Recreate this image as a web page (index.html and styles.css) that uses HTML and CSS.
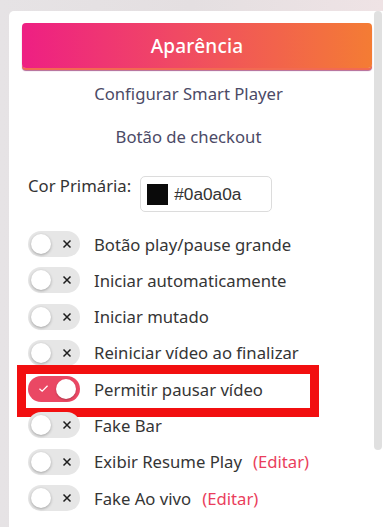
FILE: index.html
```html
<!DOCTYPE html>
<html lang="pt">
<head>
<meta charset="utf-8">
<link rel="stylesheet" href="styles.css">
</head>
<body>
<div class="card">
  <div class="header">Aparência</div>
  <div class="subtitle">Configurar Smart Player</div>
  <div class="subtitle second">Botão de checkout</div>
  <div class="color-row">
    <span class="color-label">Cor Primária:</span>
    <div class="color-input"><span class="swatch"></span><span class="hex">#0a0a0a</span></div>
  </div>
  <div class="rows">
    <div class="row"><span class="toggle"><span class="knob"></span><svg class="x" viewBox="0 0 10 10"><path d="M1.5 1.5L8.5 8.5M8.5 1.5L1.5 8.5"/></svg></span><span class="label">Botão play/pause grande</span></div>
    <div class="row"><span class="toggle"><span class="knob"></span><svg class="x" viewBox="0 0 10 10"><path d="M1.5 1.5L8.5 8.5M8.5 1.5L1.5 8.5"/></svg></span><span class="label">Iniciar automaticamente</span></div>
    <div class="row"><span class="toggle"><span class="knob"></span><svg class="x" viewBox="0 0 10 10"><path d="M1.5 1.5L8.5 8.5M8.5 1.5L1.5 8.5"/></svg></span><span class="label">Iniciar mutado</span></div>
    <div class="row"><span class="toggle"><span class="knob"></span><svg class="x" viewBox="0 0 10 10"><path d="M1.5 1.5L8.5 8.5M8.5 1.5L1.5 8.5"/></svg></span><span class="label">Reiniciar vídeo ao finalizar</span></div>
    <div class="row highlighted"><span class="toggle on"><svg class="check" viewBox="0 0 12 10"><path d="M1.5 5.2L4.5 8L10.5 2"/></svg><span class="knob"></span></span><span class="label">Permitir pausar vídeo</span><span class="mark"></span></div>
    <div class="row"><span class="toggle"><span class="knob"></span><svg class="x" viewBox="0 0 10 10"><path d="M1.5 1.5L8.5 8.5M8.5 1.5L1.5 8.5"/></svg></span><span class="label">Fake Bar</span></div>
    <div class="row"><span class="toggle"><span class="knob"></span><svg class="x" viewBox="0 0 10 10"><path d="M1.5 1.5L8.5 8.5M8.5 1.5L1.5 8.5"/></svg></span><span class="label">Exibir Resume Play</span><span class="edit">(Editar)</span></div>
    <div class="row"><span class="toggle"><span class="knob"></span><svg class="x" viewBox="0 0 10 10"><path d="M1.5 1.5L8.5 8.5M8.5 1.5L1.5 8.5"/></svg></span><span class="label">Fake Ao vivo</span><span class="edit">(Editar)</span></div>
  </div>
  <div class="scrollbar"></div>
</div>
</body>
</html>
```
FILE: styles.css
```css
html, body {
  margin: 0;
  padding: 0;
  height: 527px;
  overflow: hidden;
}
body {
  background: linear-gradient(90deg, #e6e3e5 0%, #e4dfe1 50%, #efe3e5 100%);
  font-family: "Noto Sans", "Open Sans", sans-serif;
  padding: 11px 0 0 9px;
  box-sizing: border-box;
}
.card {
  position: relative;
  background: #fff;
  border-radius: 5px 0 0 0;
  padding: 12px 11px 0 13px;
  height: 516px;
  box-sizing: border-box;
}
.header {
  height: 45px;
  border-radius: 4px;
  background: linear-gradient(90deg, #ee1f83 0%, #f04a63 45%, #f47c34 100%);
  box-shadow: 0 2px 0 #f26a52, 0 3px 1px #b26896;
  color: #fff;
  font-size: 19px;
  font-weight: 500;
  display: flex;
  align-items: center;
  justify-content: center;
  letter-spacing: 0.2px;
}
.subtitle {
  text-align: center;
  color: #4b4a66;
  font-size: 16.7px;
  line-height: 20px;
  margin-top: 16px;
  padding-right: 17px;
}
.subtitle.second {
  margin-top: 23px;
}
.color-row {
  display: flex;
  align-items: flex-start;
  gap: 9px;
  margin-top: 29px;
  padding-left: 6px;
}
.color-label {
  font-size: 16.7px;
  line-height: 20px;
  color: #333;
}
.color-input {
  width: 132px;
  height: 36px;
  box-sizing: border-box;
  border: 1px solid #dcdcdc;
  border-radius: 5px;
  display: flex;
  align-items: center;
  padding-left: 6px;
  gap: 6px;
}
.swatch {
  width: 21px;
  height: 21px;
  background: #0a0a0a;
}
.hex {
  font-family: "Liberation Sans", Arial, sans-serif;
  font-size: 17.3px;
  color: #333;
}
.rows {
  display: flex;
  flex-direction: column;
  gap: 10.3px;
  margin-top: 19px;
  padding-left: 6px;
}
.row {
  position: relative;
  display: flex;
  align-items: center;
  height: 26px;
}
.toggle {
  position: relative;
  width: 52px;
  height: 26px;
  border-radius: 13px;
  background: #e6e6e6;
  flex: none;
  display: flex;
  align-items: center;
}
.knob {
  position: absolute;
  left: 3px;
  top: 3px;
  width: 20px;
  height: 20px;
  border-radius: 50%;
  background: #fff;
  box-shadow: 0 1px 3px rgba(0,0,0,0.3);
}
.x {
  position: absolute;
  left: 34px;
  top: 8px;
  width: 10px;
  height: 10px;
  fill: none;
  stroke: #1e1e1e;
  stroke-width: 1.5;
}
.toggle.on {
  background: #ea4864;
}
.toggle.on .knob {
  left: 28px;
  box-shadow: 0 1px 2px rgba(0,0,0,0.25);
}
.check {
  position: absolute;
  left: 10px;
  top: 8px;
  width: 11px;
  height: 9px;
  fill: none;
  stroke: #fff;
  stroke-width: 1.4;
}
.label {
  margin-left: 14px;
  font-size: 16.7px;
  color: #353535;
  white-space: nowrap;
}
.edit {
  margin-left: 11px;
  font-size: 16.7px;
  color: #ea3e5c;
}
.mark {
  position: absolute;
  left: -11px;
  top: -11px;
  width: 302px;
  height: 52px;
  box-sizing: border-box;
  border: 9px solid #f20f10;
}
.scrollbar {
  position: absolute;
  right: 1px;
  top: 0;
  width: 8px;
  height: 439px;
  border-radius: 4px;
  background: #e0e0e0;
}
```
